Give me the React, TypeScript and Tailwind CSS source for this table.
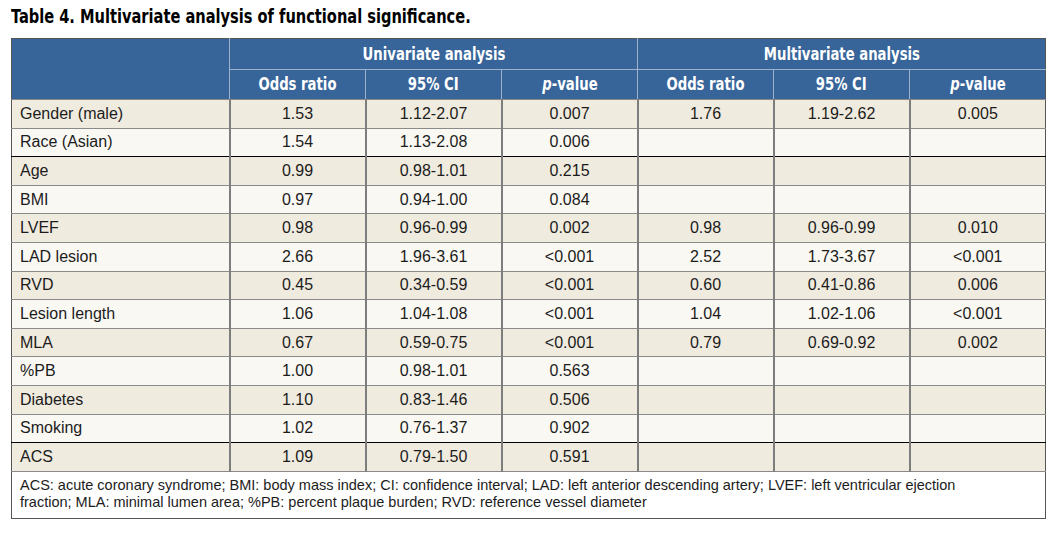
const rows: string[][] = [
  ["Gender (male)", "1.53", "1.12-2.07", "0.007", "1.76", "1.19-2.62", "0.005"],
  ["Race (Asian)", "1.54", "1.13-2.08", "0.006", "", "", ""],
  ["Age", "0.99", "0.98-1.01", "0.215", "", "", ""],
  ["BMI", "0.97", "0.94-1.00", "0.084", "", "", ""],
  ["LVEF", "0.98", "0.96-0.99", "0.002", "0.98", "0.96-0.99", "0.010"],
  ["LAD lesion", "2.66", "1.96-3.61", "<0.001", "2.52", "1.73-3.67", "<0.001"],
  ["RVD", "0.45", "0.34-0.59", "<0.001", "0.60", "0.41-0.86", "0.006"],
  ["Lesion length", "1.06", "1.04-1.08", "<0.001", "1.04", "1.02-1.06", "<0.001"],
  ["MLA", "0.67", "0.59-0.75", "<0.001", "0.79", "0.69-0.92", "0.002"],
  ["%PB", "1.00", "0.98-1.01", "0.563", "", "", ""],
  ["Diabetes", "1.10", "0.83-1.46", "0.506", "", "", ""],
  ["Smoking", "1.02", "0.76-1.37", "0.902", "", "", ""],
  ["ACS", "1.09", "0.79-1.50", "0.591", "", "", ""],
];

// condensed bold face, squeezed a bit more to match the journal's narrow type
const cond = "font-['Liberation_Sans_Narrow','DejaVu_Sans_Condensed','Roboto',sans-serif] font-bold";
const squeeze = "inline-block scale-x-[0.84] whitespace-nowrap";

function SubHeads() {
  return (
    <>
      <th className="border-l border-[#9fb3cc] font-bold">
        <span className={squeeze}>Odds ratio</span>
      </th>
      <th className="border-l border-[#9fb3cc] font-bold">
        <span className={squeeze}>95% CI</span>
      </th>
      <th className="border-l border-[#9fb3cc] font-bold">
        <span className={squeeze}>
          <span className="italic">p</span>-value
        </span>
      </th>
    </>
  );
}

export default function App() {
  return (
    <div className="w-[1059px] h-[533px] bg-white pt-[4px] pl-[11px] font-['Liberation_Sans',Arial,sans-serif] text-[#1c1c1c]">
      <h1 className={`${cond} text-[19px] leading-[24px] text-black`}>
        <span className="inline-block origin-left scale-x-[0.855] whitespace-nowrap">
          Table 4. Multivariate analysis of functional significance.
        </span>
      </h1>

      <table className="mt-[10px] w-[1034px] table-fixed border-collapse border border-[#555] text-[16px]">
        <colgroup>
          <col className="w-[218px]" />
          <col className="w-[136px]" />
          <col className="w-[136px]" />
          <col className="w-[136px]" />
          <col className="w-[136px]" />
          <col className="w-[136px]" />
          <col className="w-[136px]" />
        </colgroup>
        <thead className={`${cond} bg-[#376499] text-white text-[17.5px]`}>
          <tr className="h-[31px]">
            <th rowSpan={2}></th>
            <th colSpan={3} className="border-l border-b border-[#9fb3cc] font-bold">
              <span className={squeeze}>Univariate analysis</span>
            </th>
            <th colSpan={3} className="border-l border-b border-[#9fb3cc] font-bold">
              <span className={squeeze}>Multivariate analysis</span>
            </th>
          </tr>
          <tr className="h-[30px]">
            <SubHeads />
            <SubHeads />
          </tr>
        </thead>
        <tbody>
          {rows.map((r, i) => (
            <tr
              key={r[0]}
              className={`h-[28.6px] border-t ${
                i === 2 || i === 12 ? "border-black" : "border-[#8a8a8a]"
              } ${i % 2 === 0 ? "bg-[#f0ebdf]" : "bg-[#faf8f3]"}`}
            >
              {r.map((c, j) => (
                <td
                  key={j}
                  className={
                    j === 0
                      ? "pl-[8px] text-left"
                      : "border-l-2 border-[#7d7d7d] text-center"
                  }
                >
                  {c}
                </td>
              ))}
            </tr>
          ))}
          <tr className="border-t border-[#8a8a8a] bg-white">
            <td colSpan={7} className="px-[8px] pt-[5px] pb-[7px] text-[14.5px] leading-[17px]">
              ACS: acute coronary syndrome; BMI: body mass index; CI: confidence interval; LAD: left anterior descending artery; LVEF: left ventricular ejection
              <br />
              fraction; MLA: minimal lumen area; %PB: percent plaque burden; RVD: reference vessel diameter
            </td>
          </tr>
        </tbody>
      </table>
    </div>
  );
}
